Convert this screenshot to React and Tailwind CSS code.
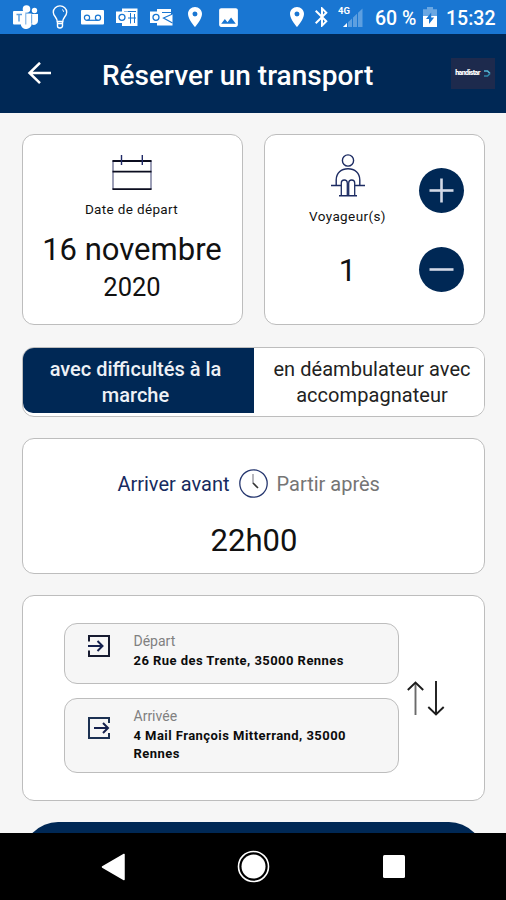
import React, { useState } from 'react';
import { MdLocationOn, MdBluetooth, MdImage } from 'react-icons/md';

const StatusBar = () => (
  <div className="h-[34px] shrink-0 bg-[#1976d2] flex items-center text-white">
    {/* Teams */}
    <svg className="ml-[13px] w-[26px] h-[24px] shrink-0" viewBox="0 0 26 24" fill="currentColor">
      <circle cx="13.500" cy="4" r="3.800" />
      <circle cx="21.500" cy="5.500" r="2.700" />
      <path d="M18.500 9H25v7a4 4 0 0 1-6.500 3z" />
      <path d="M8 8.500h10.500v9a5.500 5.500 0 0 1-10.500 3z" />
      <rect x="0" y="6" width="12.500" height="13.500" rx="1" />
      <path d="M3.500 9.500h5.500M6 9.500v7" stroke="#5c9fe0" strokeWidth="1.500" />
      <path d="M12.800 8.500v11M18.700 9.500v9" stroke="#5c9fe0" strokeWidth=".9" />
    </svg>
    {/* Light bulb */}
    <svg className="ml-[13px] w-[16px] h-[24px] shrink-0" viewBox="0 0 16 24" fill="none" stroke="currentColor" strokeWidth="1.400">
      <path d="M5.200 16.500c0-4-3.900-5.400-3.900-9.300a6.700 6.300 0 0 1 13.400 0c0 3.900-3.900 5.300-3.900 9.300z" />
      <path d="M5.500 16.500v4.500a2.500 2 0 0 0 5 0v-4.500M5.500 18.500h5" />
      <path d="M10 4.500c1.200.500 1.600 1.500 1.600 2.500" strokeWidth="1" />
    </svg>
    {/* Voicemail */}
    <svg className="ml-[13px] w-[23px] h-[15px] shrink-0" viewBox="0 0 23 15">
      <rect width="23" height="14.500" rx="1" fill="currentColor" />
      <path d="M6 10.300h11" stroke="#1976d2" strokeWidth="1.200" />
      <circle cx="6" cy="7.700" r="2.600" fill="none" stroke="#1976d2" strokeWidth="1.200" />
      <circle cx="17" cy="7.700" r="2.600" fill="none" stroke="#1976d2" strokeWidth="1.200" />
    </svg>
    {/* Outlook calendar */}
    <svg className="ml-[12px] w-[22px] h-[19px] shrink-0" viewBox="0 0 22 19">
      <rect x="6" y=".500" width="15.500" height="17.500" fill="currentColor" />
      <path d="M8 3.500h12M14.500 5v10.500M18.500 6v9M12 10h8" stroke="#1976d2" strokeWidth="1" />
      <rect x="0" y="3.500" width="12" height="11.500" fill="currentColor" />
      <circle cx="6" cy="9.300" r="3" fill="none" stroke="#1976d2" strokeWidth="1.300" />
    </svg>
    {/* Outlook mail */}
    <svg className="ml-[12px] w-[23px] h-[19px] shrink-0" viewBox="0 0 23 19">
      <path d="M7 1h14v5h1.500v11.500H7z" fill="currentColor" />
      <path d="M12 4.500h10M22.500 6l-9 4 9 5" stroke="#1976d2" strokeWidth="1.200" fill="none" />
      <rect x="0" y="3.500" width="12" height="11.500" fill="currentColor" />
      <circle cx="6" cy="9.300" r="3" fill="none" stroke="#1976d2" strokeWidth="1.300" />
    </svg>
    <MdLocationOn className="ml-[10px] w-[24px] h-[24px] shrink-0" />
    <MdImage className="ml-[9px] w-[25px] h-[25px] shrink-0" />

    <MdLocationOn className="ml-[44px] w-[24px] h-[24px] shrink-0" />
    <MdBluetooth className="ml-[1px] w-[24px] h-[24px] shrink-0" />
    {/* Mobile network */}
    <svg className="ml-[4px] w-[27px] h-[24px] shrink-0" viewBox="0 0 27 24">
      <text x="0" y="9" fontSize="9.500" fontWeight="700" fontFamily="Roboto" fill="currentColor" textLength="12">4G</text>
      <path d="M24.500 3.500V22H5z" fill="#5d9fe0" />
      <path d="M5 22l4-4v4z" fill="currentColor" />
      <path d="M9.500 14v8M14.500 10v12M19.500 6v16" stroke="#1976d2" strokeWidth="1" />
    </svg>
    <span className="ml-[10px] w-[42px] pt-[4px] text-[19.5px] font-medium leading-none whitespace-nowrap">60 %</span>
    {/* Charging battery */}
    <svg className="ml-[6px] w-[14px] h-[20px] shrink-0" viewBox="0 0 14 20">
      <path d="M4 0h6v2.300h4V9H0V2.300h4z" fill="#69a7e3" />
      <path d="M0 9h14v11H0z" fill="currentColor" />
      <path d="M8.200 5.500v5h3L6 17v-5H3z" fill="#1976d2" />
    </svg>
    <span className="ml-[9px] pt-[4px] text-[19.5px] font-medium leading-none">15:32</span>
  </div>
);

const Header = () => (
  <header className="h-[79px] shrink-0 bg-[#002855] flex items-center text-white">
    <button type="button" className="ml-[27px] w-[25px] h-[24px]">
      <svg className="w-[25px] h-[24px]" viewBox="0 0 25 24" fill="none" stroke="currentColor" strokeWidth="2.500">
        <path d="M24 11H2.500M13 .800L2.500 11 13 21.200" />
      </svg>
    </button>
    <h1 className="ml-[50px] pt-[4px] text-[28px] font-medium leading-none whitespace-nowrap">
      Réserver un transport
    </h1>
    <div className="ml-auto mr-[11px] w-[44px] h-[31px] bg-[#1d2a4d] flex items-center justify-center gap-[4px]">
      <span className="text-[7px] font-black leading-none tracking-[-0.6px]">handistar</span>
      <svg className="w-[7px] h-[7px]" viewBox="0 0 7 7" fill="none" strokeWidth="1.600">
        <path d="M0 1h3.500L6 3.500" stroke="#56b8d6" />
        <path d="M6 3.500L3.500 6H0" stroke="#2f86a8" />
      </svg>
    </div>
  </header>
);

const CalendarIcon = () => (
  <svg className="w-[40px] h-[37px]" viewBox="0 0 40 37" fill="none">
    <path d="M1 6.500v29M39 6.500v29" stroke="#5c6088" strokeWidth="1.200" />
    <path d="M.5 7h39M.5 17.700h39M.5 35.200h39" stroke="#0b0d1f" strokeWidth="1.800" />
    <path d="M9.500 1v10M30.300 1v10" stroke="#202a66" strokeWidth="1.400" />
  </svg>
);

const TravellerIcon = () => (
  <svg className="w-[34px] h-[43px]" viewBox="0 0 34 43" fill="none" stroke="#1c2b62" strokeWidth="1.400">
    <circle cx="17" cy="6.500" r="5.600" />
    <path d="M5.200 31V26c0-7 5-11.300 11.800-11.300S28.800 19 28.800 26v5" />
    <path d="M0 31.500h10M24 31.500h10M8 41.700h18" />
    <path d="M10.300 41.500V29c0-4 6-4 6 0v12.500M17.700 41.500V29c0-4 6-4 6 0v12.500" strokeWidth="1.300" />
  </svg>
);

const RoundButton = ({ plus, onClick }) => (
  <button type="button" onClick={onClick} className="w-[45px] h-[45px] rounded-full bg-[#002855]">
    <svg className="w-[45px] h-[45px]" viewBox="0 0 45 45" stroke="#d3d9e6" strokeWidth="2.600">
      <path d="M10.500 22.500h24" />
      {plus && <path d="M22.500 10.500v24" />}
    </svg>
  </button>
);

const EnterIcon = () => (
  <svg className="w-[22px] h-[22px]" viewBox="0 0 22 22" fill="none" stroke="#14204d" strokeWidth="2">
    <path d="M1 6.500V1h20v20H1v-5.500" stroke="#171b30" />
    <path d="M0 11h14M9.500 6l5 5-5 5" />
  </svg>
);

const ExitIcon = () => (
  <svg className="w-[22px] h-[22px]" viewBox="0 0 22 22" fill="none" stroke="#14204d" strokeWidth="2">
    <path d="M21 6V1H1v20h20v-5" stroke="#1c3152" />
    <path d="M6 11h14M15 6l5 5-5 5" />
  </svg>
);

const Address = ({ icon, label, children, className }) => (
  <div className={`${className} w-[335px] rounded-[13px] border-[1.5px] border-[#bdbdbd] bg-[#f6f6f6] flex`}>
    {icon}
    <div className="ml-[24px] pt-[9px] whitespace-nowrap">
      <p className="text-[14px] leading-[17px] text-[#808080]">{label}</p>
      <p className="mt-[2px] text-[13px] leading-[18px] tracking-[0.45px] font-bold text-[#0c0c0c]">{children}</p>
    </div>
  </div>
);

const App = () => {
  const [travellers, setTravellers] = useState(1);
  const [walking, setWalking] = useState(true);

  const active = 'bg-[#002855] text-[#eef1f6] font-medium';
  const idle = 'bg-white text-[#222]';

  return (
    <div className="w-[506px] h-[900px] overflow-hidden flex flex-col bg-[#f6f6f6] font-[Roboto,sans-serif]">
      <StatusBar />
      <Header />

      <main className="h-[720px] shrink-0 overflow-hidden px-[21.5px] pt-[21px] flex flex-col">
        <div className="flex justify-between shrink-0">
          {/* Date */}
          <section className="w-[221px] h-[191px] rounded-[12px] border-[1.5px] border-[#bdbdbd] bg-white flex flex-col items-center pt-[19px] text-[#111]">
            <CalendarIcon />
            <p className="mt-[10px] -ml-[1px] text-[13.5px] leading-[16px] tracking-[0.35px]">Date de départ</p>
            <p className="mt-[15px] text-[31px] leading-[36px] whitespace-nowrap">16 novembre</p>
            <p className="mt-[4px] text-[25.5px] leading-[30px]">2020</p>
          </section>

          {/* Travellers */}
          <section className="w-[221px] h-[191px] rounded-[12px] border-[1.5px] border-[#bdbdbd] bg-white flex text-[#111]">
            <div className="ml-[33px] w-[100px] pt-[19px] flex flex-col items-center">
              <TravellerIcon />
              <p className="mt-[11px] text-[13.5px] leading-[16px] tracking-[0.4px]">Voyageur(s)</p>
              <p className="mt-[29px] text-[31px] leading-[36px]">{travellers}</p>
            </div>
            <div className="ml-[21px] pt-[33px] flex flex-col gap-[34px]">
              <RoundButton plus onClick={() => setTravellers((n) => n + 1)} />
              <RoundButton onClick={() => setTravellers((n) => Math.max(1, n - 1))} />
            </div>
          </section>
        </div>

        {/* Mobility */}
        <div className="mt-[22px] h-[70px] shrink-0 rounded-[12px] border-[1.5px] border-[#bdbdbd] bg-white overflow-hidden flex text-[20px] leading-[26px] text-center">
          <button type="button" onClick={() => setWalking(true)} className={`w-[231px] h-[65px] pt-[2px] pr-[5px] rounded-bl-[10px] ${walking ? active : idle}`}>
            avec difficultés à la
            <br />
            marche
          </button>
          <button type="button" onClick={() => setWalking(false)} className={`grow h-[65px] pt-[2px] pl-[7px] whitespace-nowrap tracking-[0.05px] ${walking ? idle : active}`}>
            en déambulateur avec
            <br />
            accompagnateur
          </button>
        </div>

        {/* Time */}
        <section className="mt-[21px] h-[136px] shrink-0 rounded-[12px] border-[1.5px] border-[#bdbdbd] bg-white pt-[29px] flex flex-col items-center">
          <div className="flex items-center text-[20px] leading-[30px] whitespace-nowrap">
            <span className="w-[208px] pt-[1px] text-right text-[#172b60]">Arriver avant</span>
            <svg className="ml-[9px] w-[29px] h-[29px]" viewBox="0 0 29 29" fill="none">
              <circle cx="14.500" cy="14.500" r="13.700" stroke="#26376f" strokeWidth="1.300" />
              <path d="M14 5v9.500" stroke="#a5a5ad" strokeWidth="1.600" />
              <path d="M14 14l5 5" stroke="#333" strokeWidth="1.600" />
            </svg>
            <span className="ml-[9px] w-[208px] pt-[1px] text-[#757575]">Partir après</span>
          </div>
          <p className="mt-[24px] pl-[2px] text-[31px] leading-[36px] text-[#111]">22h00</p>
        </section>

        {/* Route */}
        <section className="mt-[21px] h-[206px] shrink-0 rounded-[12px] border-[1.5px] border-[#bdbdbd] bg-white flex items-center">
          <div className="ml-[41px] flex flex-col gap-[14px]">
            <Address label="Départ" className="h-[61px]" icon={<div className="ml-[23px] mt-[11px]"><EnterIcon /></div>}>
              26 Rue des Trente, 35000 Rennes
            </Address>
            <Address label="Arrivée" className="h-[75px]" icon={<div className="ml-[23px] mt-[18px]"><ExitIcon /></div>}>
              4 Mail François Mitterrand, 35000
              <br />
              Rennes
            </Address>
          </div>
          <button type="button" className="ml-[8px] w-[38px] h-[35px]">
            <svg className="w-[38px] h-[35px]" viewBox="0 0 38 35" fill="none" stroke="#1c1c1c" strokeWidth="1.900">
              <path d="M8.500 2v32" stroke="#6a6a6a" />
              <path d="M.8 9l7.700-7.500L16.200 9" />
              <path d="M29 0v33M21.300 26l7.700 7.500 7.700-7.500" />
            </svg>
          </button>
        </section>

        <div className="mt-[21px] mx-[1px] h-[70px] shrink-0 rounded-full bg-[#002855]" />
      </main>

      {/* Android navigation */}
      <nav className="h-[67px] shrink-0 bg-black flex items-center">
        <svg className="ml-[101px] w-[24px] h-[28px]" viewBox="0 0 24 28">
          <path d="M1.500 14L23 1.500v25z" fill="#fff" stroke="#fff" strokeWidth="1.500" strokeLinejoin="round" />
        </svg>
        <svg className="ml-[112px] w-[33px] h-[33px]" viewBox="0 0 33 33">
          <circle cx="16.500" cy="16.500" r="15" fill="none" stroke="#fff" strokeWidth="1.600" />
          <circle cx="16.500" cy="16.500" r="12" fill="#fff" />
        </svg>
        <div className="ml-[113px] w-[22px] h-[23px] rounded-[1.5px] bg-white" />
      </nav>
    </div>
  );
};

export default App;
